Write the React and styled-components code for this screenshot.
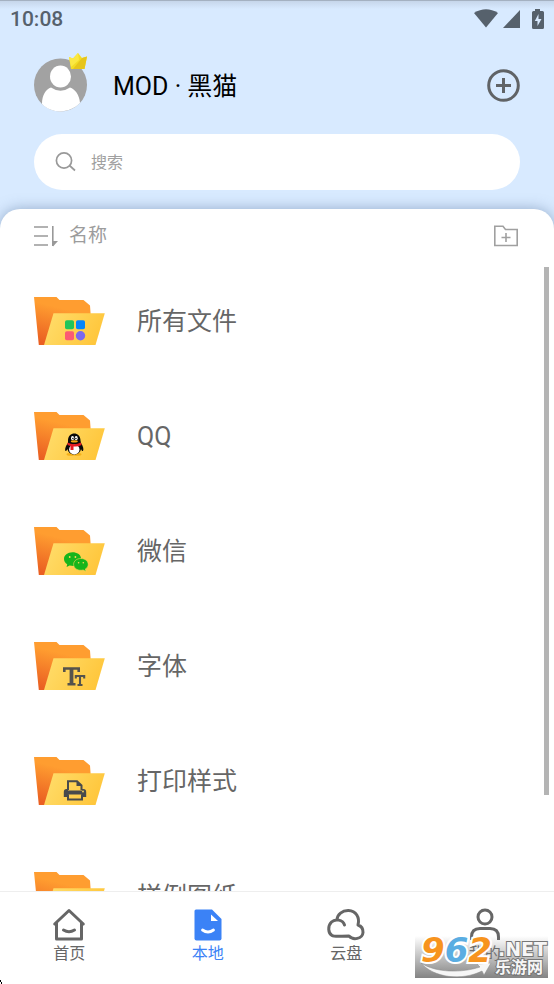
import React, { useId } from "react";
import styled, { createGlobalStyle } from "styled-components";

const GlobalStyle = createGlobalStyle`
  * { box-sizing: border-box; }
  body {
    margin: 0;
    background: #fff;
    font-family: Roboto, "Noto Sans CJK SC", sans-serif;
  }
  button { font: inherit; color: inherit; background: none; border: 0; padding: 0; cursor: pointer; }
  svg { display: block; flex: none; }
`;

const Screen = styled.div`
  position: relative;
  display: flex;
  flex-direction: column;
  height: 100vh;
  overflow: hidden;
  background: #d8eaff;
`;

const StatusBar = styled.div`
  display: flex;
  align-items: center;
  justify-content: space-between;
  height: 36px;
  padding: 0 10px;
  border-top: 1px solid #a4b1c1;
  background: linear-gradient(#c6d6ea, #d8eaff 8px);
  color: #56616c;
`;

const Time = styled.time`
  font-size: 21px;
  font-weight: 500;
  line-height: 24px;
`;

const StatusIcons = styled.div`
  display: flex;
  align-items: center;
  gap: 5px;
`;

const Profile = styled.header`
  display: flex;
  align-items: center;
  gap: 26px;
  padding: 22px 34px;
`;

const Avatar = styled.div`
  position: relative;
`;

const Crown = styled.svg`
  position: absolute;
  top: -5px;
  right: 0;
`;

const UserName = styled.h1`
  flex: 1;
  margin: 0;
  padding-top: 4px;
  font-size: 25px;
  font-weight: 400;
  line-height: 36px;
  color: #000;
`;

const SearchBox = styled.label`
  display: flex;
  align-items: center;
  gap: 15px;
  height: 56px;
  margin: 0 34px 19px;
  padding: 0 21px;
  border-radius: 28px;
  background: #fff;
  color: #999;
`;

const SearchInput = styled.input`
  flex: 1;
  min-width: 0;
  padding: 1px 0 0;
  border: 0;
  outline: 0;
  background: transparent;
  font: inherit;
  font-size: 16px;
  color: #555;
  &::placeholder { color: #a0a0a0; opacity: 1; }
`;

const Panel = styled.main`
  display: flex;
  flex-direction: column;
  flex: 1;
  min-height: 0;
  border-radius: 20px 20px 0 0;
  background: #fff;
  box-shadow: 0 0 14px rgba(80, 110, 150, 0.5);
`;

const Toolbar = styled.div`
  display: flex;
  align-items: center;
  justify-content: space-between;
  height: 54px;
  flex: none;
  padding: 0 36px 0 34px;
  color: #999;
`;

const SortButton = styled.button`
  && {
    display: flex;
    align-items: center;
    gap: 11px;
    color: #9c9c9c;
    font-size: 19px;
    line-height: 24px;
  }
`;

const ListArea = styled.div`
  position: relative;
  flex: 1;
  min-height: 0;
  overflow: hidden;
`;

const FileList = styled.ul`
  margin: 0;
  padding: 0;
  list-style: none;
`;

const FileRow = styled.button`
  && {
    display: flex;
    align-items: center;
    gap: 32px;
    width: 100%;
    height: 115px;
    padding: 0 34px;
    color: #666;
    font-size: 25px;
    line-height: 36px;
  }
`;

const FileName = styled.span`
  padding-top: 3px;
`;

const Thumb = styled.div`
  position: absolute;
  top: 4px;
  right: 5px;
  width: 5px;
  height: 84%;
  background: #b4b4b4;
`;

const TabBar = styled.nav`
  display: grid;
  grid-template-columns: repeat(4, 1fr);
  flex: none;
  height: 93px;
  border-top: 1px solid #eee;
  background: #fff;
`;

const Tab = styled.button`
  && {
    display: flex;
    flex-direction: column;
    align-items: center;
    gap: 1px;
    padding-top: 16px;
    color: ${(p) => (p.$active ? "#3b82f6" : "#666")};
    font-size: 16px;
    line-height: 20px;
  }
`;

const Watermark = styled.div`
  position: absolute;
  right: 6px;
  bottom: 6px;
  width: 133px;
  height: 42px;
  background: linear-gradient(rgba(125, 125, 125, 0), rgba(125, 125, 125, 0.95));
  font-family: "DejaVu Sans", "Noto Sans CJK SC", sans-serif;
  font-weight: 700;
  white-space: nowrap;
`;

const MarkNumber = styled.span`
  position: absolute;
  left: 6px;
  top: -6px;
  font-size: 34px;
  line-height: 40px;
  font-style: oblique;
  color: #f7941e;
  -webkit-text-stroke: 4px #fff;
  paint-order: stroke fill;
  b { color: #5aade2; }
`;

const MarkText = styled.span`
  position: absolute;
  right: ${(p) => (p.$small ? "5px" : "1px")};
  top: ${(p) => (p.$small ? "22px" : "2px")};
  font-size: ${(p) => (p.$small ? "16px" : "19px")};
  line-height: ${(p) => (p.$small ? "20px" : "22px")};
  color: #f6f6f6;
  -webkit-text-stroke: 2px #777;
  paint-order: stroke fill;
`;

const MarkSwoosh = styled.svg`
  position: absolute;
  left: 5px;
  top: 27px;
`;

const CornerMark = styled.svg`
  position: absolute;
  left: 0;
  bottom: 0;
`;

function Folder({ children }) {
  const id = useId();
  return (
    <svg width="71" height="48" viewBox="0 0 71 48" aria-hidden="true">
      <defs>
        <linearGradient id={id + "b"} x1="0.6" y1="0" x2="0.3" y2="1">
          <stop offset="0.25" stopColor="#ff9d30" />
          <stop offset="1" stopColor="#ea5f22" />
        </linearGradient>
        <linearGradient id={id + "f"} x1="0" y1="0.3" x2="1" y2="0.6">
          <stop offset="0" stopColor="#ffdc69" />
          <stop offset="1" stopColor="#ffc539" />
        </linearGradient>
      </defs>
      <path d="M0 0H22.5L25.5 3H49.5L56 8.5L57 22L20 48H4.8Z" fill={`url(#${id}b)`} />
      <path d="M19.5 16.3H70.8L61.5 48H10Z" fill={`url(#${id}f)`} />
      {children}
    </svg>
  );
}

const emblems = {
  apps: (
    <>
      <rect x="31" y="23.3" width="9" height="9" rx="1.8" fill="#22c55a" />
      <rect x="42" y="23.3" width="9" height="9" rx="1.8" fill="#0785fb" />
      <rect x="31" y="34.2" width="9" height="9" rx="1.8" fill="#fb5b73" />
      <circle cx="46.5" cy="38.7" r="4.7" fill="#7b68ee" />
    </>
  ),
  qq: (
    <>
      <ellipse cx="36.7" cy="42.4" rx="4.2" ry="1.3" fill="#f4b019" />
      <ellipse cx="43.3" cy="42.4" rx="4.2" ry="1.3" fill="#f4b019" />
      <path d="M34 28.5C34 19 46.500 19 46.500 28.500L47 31C49 34 50 37 49 39C48 39.500 47.500 38 47 37C46.500 40 44 42.500 40.300 42.500C36.500 42.500 34 40 33.500 37C33 38 32 39.500 31.500 39C30.500 37 32 33.500 34 31Z" fill="#090909" />
      <ellipse cx="40.300" cy="37.500" rx="5.200" ry="5" fill="#fff" />
      <path d="M33.500 30.500Q40 34 47 30.500L47.500 33Q44 35 39.500 34.500V38H36.500V34L33.500 33Z" fill="#e51b23" />
      <ellipse cx="38.500" cy="26.200" rx="1.500" ry="2.100" fill="#fff" />
      <ellipse cx="42.200" cy="26.200" rx="1.500" ry="2.100" fill="#fff" />
      <circle cx="38.900" cy="26.500" r=".7" /><circle cx="41.900" cy="26.500" r=".7" />
      <ellipse cx="40.300" cy="29.400" rx="3.500" ry="1.100" fill="#f4a916" />
    </>
  ),
  wechat: (
    <>
      <path d="M38.500 25.300C33.500 25.300 30 28.300 30 32C30 34.300 31.200 36 33.200 37.300L32.600 40L35.600 38.500C44 40.500 47.500 36 47 31C46.500 27.500 43 25.300 38.500 25.300Z" fill="#17b51b" />
      <path d="M47 31.500C42.500 31.500 39.600 34.100 39.600 37.400C39.600 41.600 44.500 44.200 49.200 43L52 44.500L51.300 42C53.200 41 54.200 39.300 54.200 37.400C54.200 34.100 51.200 31.500 47 31.500Z" fill="#17b51b" stroke="#ffd758" strokeWidth=".6" />
      <g fill="#ffd758"><circle cx="35.700" cy="30" r=".9" /><circle cx="41.400" cy="30" r=".9" /><circle cx="44.600" cy="35.700" r=".8" /><circle cx="49.300" cy="35.700" r=".8" /></g>
    </>
  ),
  fonts: (
    <g fill="none" stroke="#55534c">
      <path d="M30.300 30V26.500H44.700V30M33.500 42.300H41.500" strokeWidth="2.600" />
      <path d="M37.500 26.500V42.500" strokeWidth="3.800" />
      <path d="M41.800 36.500V34H50.200V36.500M46 34V43M43.500 43H48.500" strokeWidth="2.100" />
    </g>
  ),
  print: (
    <>
      <path d="M34 33V24.300H43L47.500 28.500V33" fill="none" stroke="#484a4c" strokeWidth="2" />
      <path d="M42.500 24V29H48Z" fill="#484a4c" />
      <path d="M29.800 35Q29.800 32 32.500 32H34V33.500H48V32H49.500Q52.200 32 52.200 35V40H48V37.500H34V40H29.800Z" fill="#484a4c" />
      <path d="M34 37.200V42.500H48V37.200" fill="none" stroke="#484a4c" strokeWidth="2" />
      <circle cx="49" cy="34.500" r=".9" fill="#ffd85a" />
    </>
  ),
};

const files = [
  ["所有文件", "apps"],
  ["QQ", "qq"],
  ["微信", "wechat"],
  ["字体", "fonts"],
  ["打印样式", "print"],
  ["样例图纸", null],
];

const outline = { fill: "none", stroke: "#666", strokeWidth: 3, strokeLinejoin: "round", strokeLinecap: "round" };

const tabs = [
  ["首页", (
    <g {...outline}>
      <path d="M4.500 14.500V31H29.500V14.500M2.700 16L17 2.500L31.300 16" />
      <path d="M11.500 22Q17 25.500 22.500 22" />
    </g>
  )],
  ["本地", (
    <>
      <path d="M5 1.500H21L30.500 11V30.500Q30.500 32.500 28.500 32.500H5.500Q3.500 32.500 3.500 30.500V3Q3.500 1.500 5 1.500Z" fill="#3b82f6" />
      <path d="M20 6.500V13H27Z" fill="#fff" />
      <path d="M11.500 22Q17 26 22.500 22" fill="none" stroke="#fff" strokeWidth="2.800" strokeLinecap="round" />
    </>
  )],
  ["云盘", (
    <path {...outline} d="M17.500 17C16 11.500 8 10.500 4.500 14C.5 18 1 25 5 27.500C7.500 29 14 28 22 28C26 32.500 35.500 31 36 24.500C36.200 20.500 34 18 31 17C33 9.500 29 2.800 21.500 2.500C15 2.300 10.500 6.500 10 11.500" />
  )],
  ["我的", (
    <g {...outline} strokeLinecap="butt">
      <circle cx="17" cy="9" r="7" />
      <path d="M3.500 32V29Q3.500 20.500 12 20.500H22Q30.500 20.500 30.500 29V32" />
    </g>
  )],
];

export default function App() {
  return (
    <>
      <GlobalStyle />
      <Screen>
        <StatusBar>
          <Time>10:08</Time>
          <StatusIcons>
            <svg width="24" height="19" viewBox="0 0 24 19" fill="currentColor" aria-hidden="true">
              <path d="M0 4Q12-3.500 24 4L12 18.500Z" />
            </svg>
            <svg width="17" height="18" viewBox="0 0 17 18" fill="currentColor" aria-hidden="true">
              <path d="M17 0V18H0Z" />
            </svg>
            <svg width="19" height="20" viewBox="-7 0 19 20" fill="currentColor" aria-hidden="true">
              <path fillRule="evenodd" d="M3 0H8V2H10.500Q12 2 12 3.500V18.500Q12 20 10.500 20H1.500Q0 20 0 18.500V3.500Q0 2 1.500 2H3ZM6.500 5L2.800 12H5.500V17L9.500 10H6.500Z" />
            </svg>
          </StatusIcons>
        </StatusBar>

        <Profile>
          <Avatar>
            <svg width="53" height="54" viewBox="0 0 53 54" role="img" aria-label="头像">
              <circle cx="26.500" cy="27" r="26.500" fill="#a2a2a2" />
              <ellipse cx="26.500" cy="18.500" rx="10.500" ry="11" fill="#fff" />
              <path d="M8 46C8 37 12 31 17 29.500Q26.500 36 36 29.500C41 31 45.500 37 46 45C35 56 18 56 8 46Z" fill="#fff" />
            </svg>
            <Crown width="18" height="17" viewBox="0 0 18 17" aria-hidden="true">
              <path d="M0 4L4 5.500L9 0L13 5L18 3.500L15.500 16H2Z" fill="#f3dc25" />
              <path d="M13 5L18 3.500L15.500 16H4Z" fill="#e7c51b" />
              <path d="M0 4L4 5.500L9 0L10 7L2 14Z" fill="#fbe843" />
            </Crown>
          </Avatar>
          <UserName>MOD · 黑猫</UserName>
          <button aria-label="添加">
            <svg width="33" height="33" viewBox="0 0 33 33" fill="none" stroke="#606366" strokeWidth="3" aria-hidden="true">
              <circle cx="16.500" cy="16.500" r="14.800" />
              <path d="M9 16.500H24M16.500 9V24" />
            </svg>
          </button>
        </Profile>

        <SearchBox>
          <svg width="21" height="20" viewBox="0 0 21 20" fill="none" stroke="#999" strokeWidth="1.700" aria-hidden="true">
            <circle cx="9" cy="8.500" r="7.600" />
            <path d="M14.500 13.500L20 18.500" />
          </svg>
          <SearchInput type="search" aria-label="搜索" placeholder="搜索" />
        </SearchBox>

        <Panel>
          <Toolbar>
            <SortButton>
              <svg width="24" height="22" viewBox="0 0 24 22" fill="none" stroke="#999" strokeWidth="1.600" aria-hidden="true">
                <path d="M0 2H14M0 11H14M0 20H14M18.800 1V21" />
                <path d="M19 16H24L19 21.500Z" fill="#999" stroke="none" />
              </svg>
              名称
            </SortButton>
            <button aria-label="新建文件夹">
              <svg width="24" height="22" viewBox="0 0 24 22" fill="none" stroke="#a0a0a0" strokeWidth="1.600" aria-hidden="true">
                <path d="M.8 1.300H9L11.500 4.500H23.200V20.500H.8ZM7.500 12.500H16.500M12 8V17" />
              </svg>
            </button>
          </Toolbar>
          <ListArea>
            <FileList>
              {files.map(([name, emblem]) => (
                <li key={name}>
                  <FileRow>
                    <Folder>{emblem && emblems[emblem]}</Folder>
                    <FileName>{name}</FileName>
                  </FileRow>
                </li>
              ))}
            </FileList>
            <Thumb />
          </ListArea>
        </Panel>

        <TabBar>
          {tabs.map(([label, icon]) => (
            <Tab key={label} $active={label === "本地"}>
              <svg width={label === "云盘" ? 38 : 34} height="35" viewBox={label === "云盘" ? "0 0 38 35" : "0 0 34 35"} aria-hidden="true">{icon}</svg>
              {label}
            </Tab>
          ))}
        </TabBar>

        <Watermark>
          <MarkSwoosh width="74" height="15" viewBox="0 0 74 15" aria-hidden="true">
            <path d="M1 0C16 10 42 10 60 4L57 1L71 0L64 12L62 8C42 18 14 15 1 0Z" fill="#f6f6f6" stroke="#888" strokeWidth=".5" />
          </MarkSwoosh>
          <MarkNumber>9<b>6</b>2</MarkNumber>
          <MarkText>.NET</MarkText>
          <MarkText $small>乐游网</MarkText>
        </Watermark>
        <CornerMark width="3" height="4" viewBox="0 0 3 4" aria-hidden="true">
          <path d="M0 0H1V2H2V4H1V2H0Z" />
        </CornerMark>
      </Screen>
    </>
  );
}
